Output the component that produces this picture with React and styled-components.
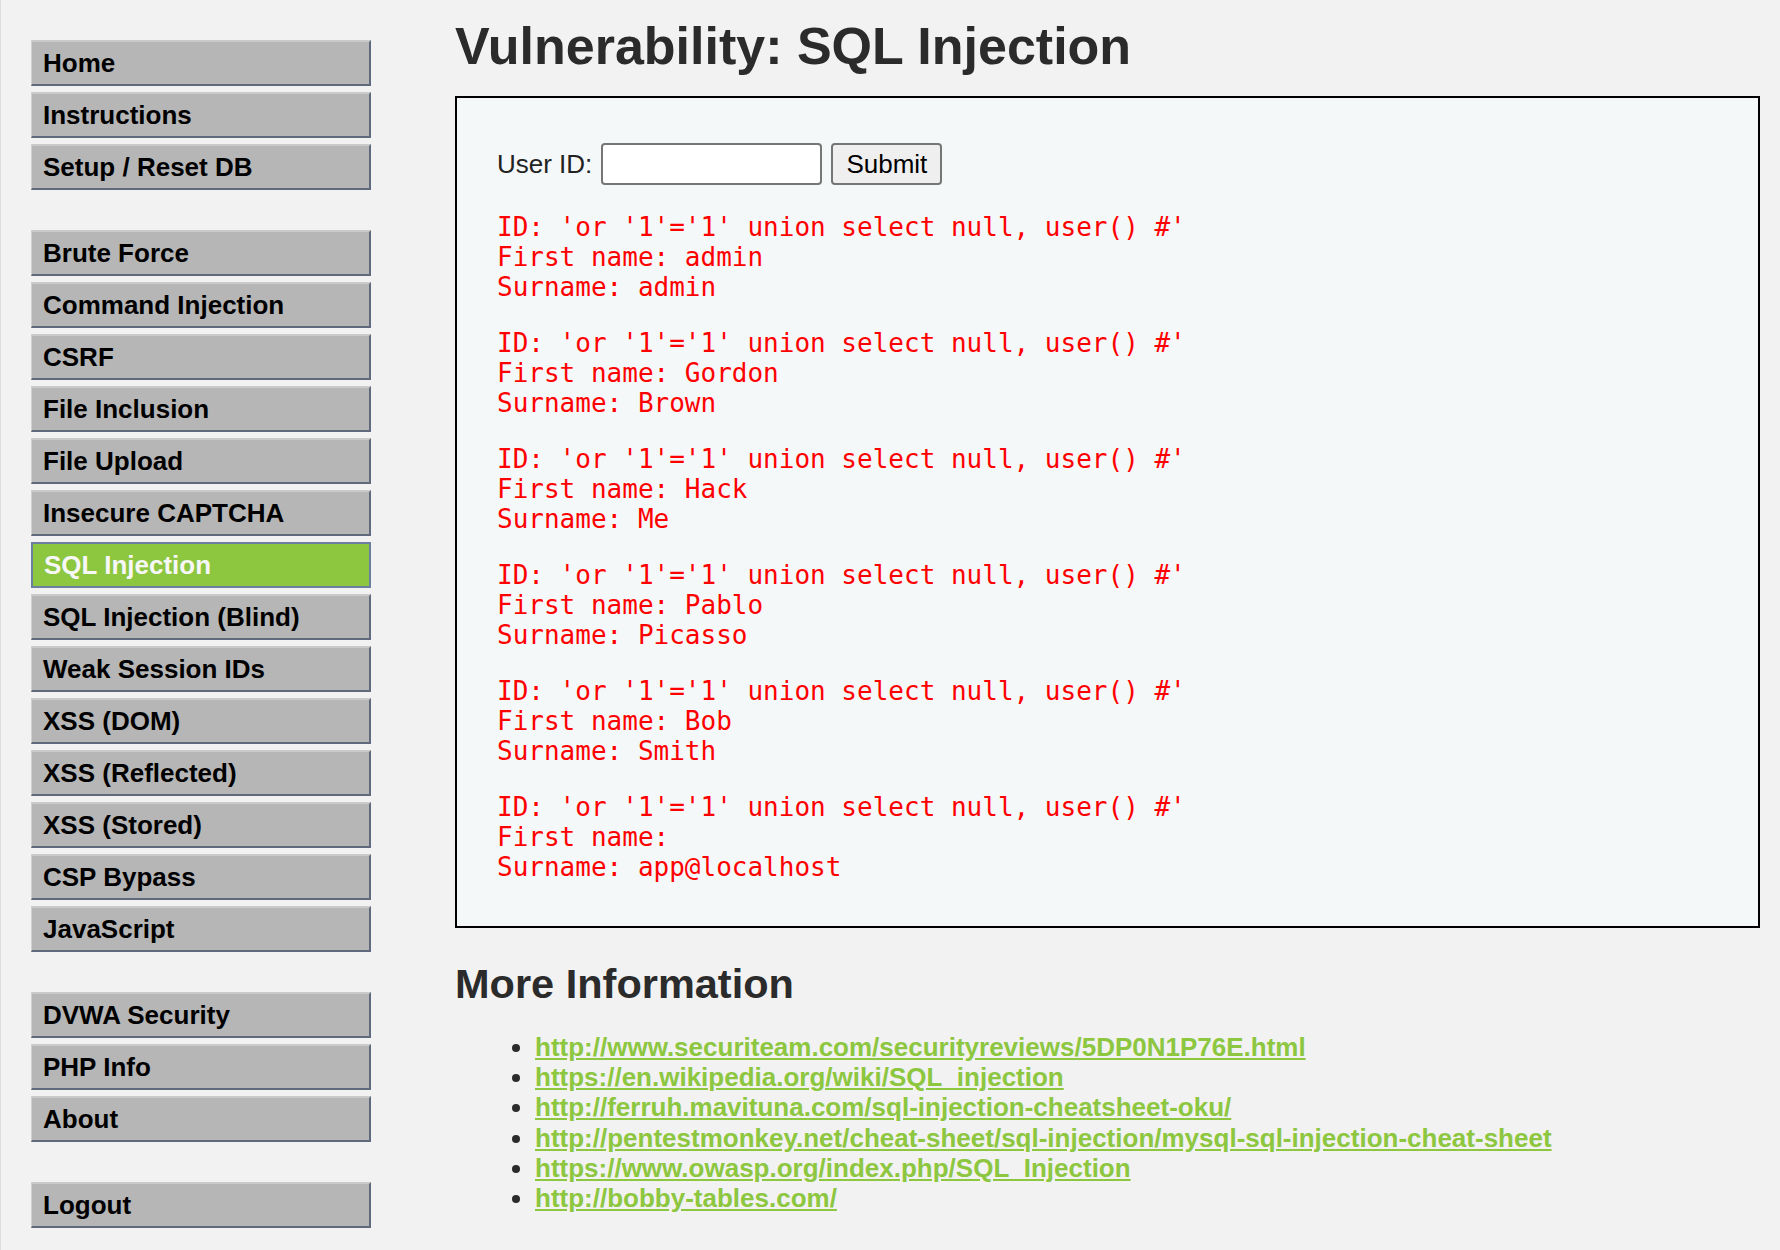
import React from "react";
import styled, { createGlobalStyle } from "styled-components";

const GlobalStyle = createGlobalStyle`
  html, body {
    margin: 0;
    padding: 0;
    background: #f2f2f2;
    overflow: hidden;
  }
  body {
    font-family: "Liberation Sans", Arial, sans-serif;
    font-size: 26px;
    color: #2b2b2b;
  }
`;

const Page = styled.div`
  display: flex;
  align-items: flex-start;
  min-height: 1250px;
  box-sizing: border-box;
  padding: 0 20px 0 30px;
  border-left: 1px solid #dedede;
`;

const Menu = styled.nav`
  width: 340px;
  flex-shrink: 0;
  margin-top: 40px;
  display: flex;
  flex-direction: column;
  gap: 40px;
`;

const Group = styled.ul`
  list-style: none;
  margin: 0;
  padding: 0;
  display: flex;
  flex-direction: column;
  gap: 6px;
`;

const Item = styled.li`
  box-sizing: border-box;
  height: 46px;
  line-height: 42px;
  padding-left: 11px;
  font-weight: bold;
  font-size: 26px;
  white-space: nowrap;
  cursor: pointer;
  color: ${({ $selected }) => ($selected ? "#f7f7f7" : "#000")};
  background: ${({ $selected }) => ($selected ? "#8dc63f" : "#b6b6b6")};
  border-top: 2px solid ${({ $selected }) => ($selected ? "#6c7fa0" : "#c9cbc9")};
  border-left: ${({ $selected }) => ($selected ? "2px solid #6c7fa0" : "1px solid #cfd1cf")};
  border-right: 2px solid ${({ $selected }) => ($selected ? "#6c7fa0" : "#5f6a7d")};
  border-bottom: 2px solid ${({ $selected }) => ($selected ? "#6c7fa0" : "#5f6a7d")};
`;

const Main = styled.main`
  flex: 1;
  margin-left: 84px;
`;

const Title = styled.h1`
  margin: 16px 0 20px;
  font-size: 52px;
  font-weight: bold;
  color: #2b2b2b;
`;

const CodeArea = styled.div`
  box-sizing: border-box;
  background: #f5f8f9;
  border: 2px solid #000;
  padding: 45px 40px 44px;
`;

const Form = styled.form`
  display: flex;
  align-items: center;
  gap: 9px;
  margin-bottom: 27px;
  color: #222;
`;

const Input = styled.input`
  box-sizing: border-box;
  width: 221px;
  height: 42px;
  background: #fff;
  border: 2px solid #767676;
  border-radius: 4px;
  font-size: 26px;
`;

const Button = styled.button`
  box-sizing: border-box;
  width: 111px;
  height: 42px;
  background: #efefef;
  border: 2px solid #767676;
  border-radius: 4px;
  font-family: "Liberation Sans", Arial, sans-serif;
  font-size: 26px;
  color: #000;
  padding: 0;
`;

const Results = styled.div`
  display: flex;
  flex-direction: column;
  gap: 26px;
`;

const Pre = styled.pre`
  margin: 0;
  color: #ff0000;
  font-family: "DejaVu Sans Mono", monospace;
  font-size: 26px;
  line-height: 30px;
  white-space: pre;
`;

const SubTitle = styled.h2`
  margin: 32px 0 24px;
  font-size: 41.5px;
  font-weight: bold;
  color: #2b2b2b;
`;

const LinkList = styled.ul`
  margin: 0;
  padding-left: 80px;
  line-height: 30.2px;
  color: #2b2b2b;
`;

const Link = styled.a`
  color: #8dc63f;
  font-weight: bold;
  text-decoration: underline;
`;

const menuGroups = [
  ["Home", "Instructions", "Setup / Reset DB"],
  [
    "Brute Force",
    "Command Injection",
    "CSRF",
    "File Inclusion",
    "File Upload",
    "Insecure CAPTCHA",
    "SQL Injection",
    "SQL Injection (Blind)",
    "Weak Session IDs",
    "XSS (DOM)",
    "XSS (Reflected)",
    "XSS (Stored)",
    "CSP Bypass",
    "JavaScript",
  ],
  ["DVWA Security", "PHP Info", "About"],
  ["Logout"],
];

const rows = [
  ["admin", "admin"],
  ["Gordon", "Brown"],
  ["Hack", "Me"],
  ["Pablo", "Picasso"],
  ["Bob", "Smith"],
  ["", "app@localhost"],
];

const links = [
  "http://www.securiteam.com/securityreviews/5DP0N1P76E.html",
  "https://en.wikipedia.org/wiki/SQL_injection",
  "http://ferruh.mavituna.com/sql-injection-cheatsheet-oku/",
  "http://pentestmonkey.net/cheat-sheet/sql-injection/mysql-sql-injection-cheat-sheet",
  "https://www.owasp.org/index.php/SQL_Injection",
  "http://bobby-tables.com/",
];

const query = "'or '1'='1' union select null, user() #'";

export default function App() {
  return (
    <>
      <GlobalStyle />
      <Page>
        <Menu>
          {menuGroups.map((group, i) => (
            <Group key={i}>
              {group.map((name) => (
                <Item key={name} $selected={name === "SQL Injection"}>
                  {name}
                </Item>
              ))}
            </Group>
          ))}
        </Menu>
        <Main>
          <Title>Vulnerability: SQL Injection</Title>
          <CodeArea>
            <Form onSubmit={(e) => e.preventDefault()}>
              User ID:
              <Input type="text" name="id" />
              <Button type="submit">Submit</Button>
            </Form>
            <Results>
              {rows.map(([first, last], i) => (
                <Pre key={i}>
                  {`ID: ${query}\nFirst name: ${first}\nSurname: ${last}`}
                </Pre>
              ))}
            </Results>
          </CodeArea>
          <SubTitle>More Information</SubTitle>
          <LinkList>
            {links.map((href) => (
              <li key={href}>
                <Link href={href} onClick={(e) => e.preventDefault()}>
                  {href}
                </Link>
              </li>
            ))}
          </LinkList>
        </Main>
      </Page>
    </>
  );
}
